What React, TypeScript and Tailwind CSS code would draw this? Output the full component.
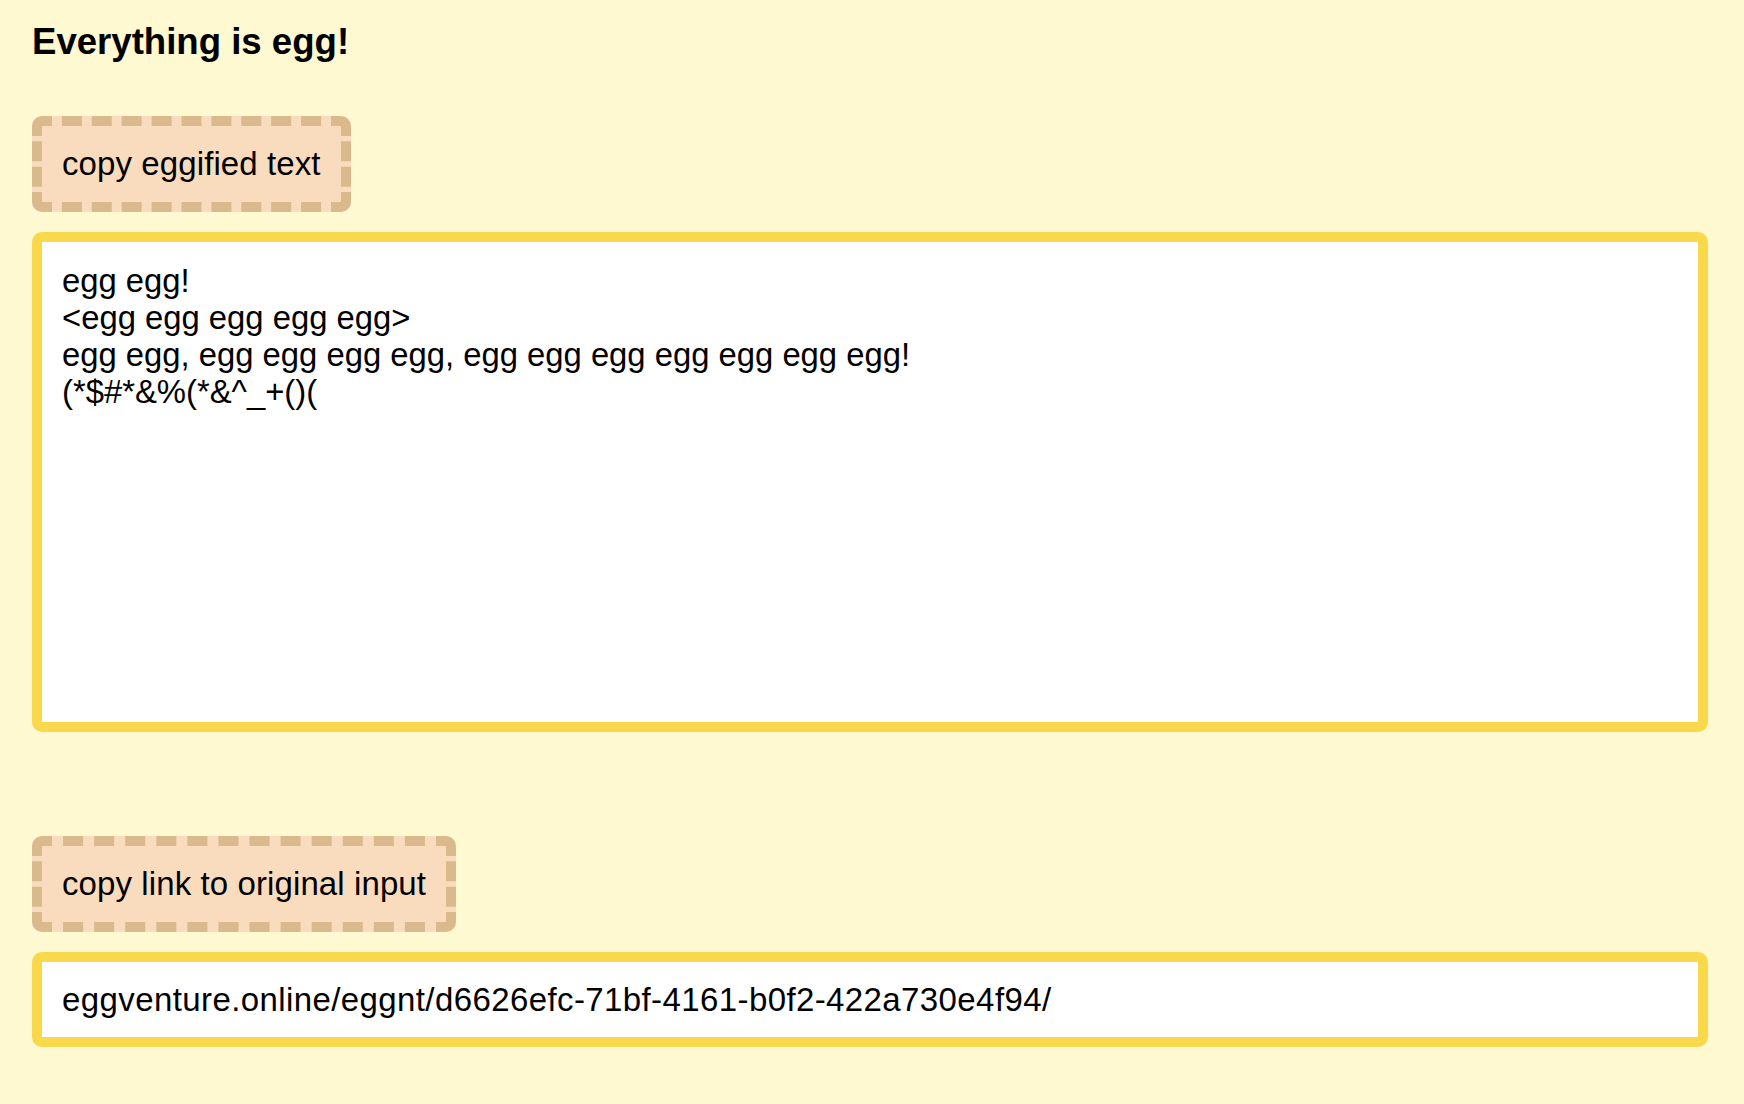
import React from 'react';

const eggText = `egg egg!
<egg egg egg egg egg>
egg egg, egg egg egg egg, egg egg egg egg egg egg egg!
(*$#*&%(*&^_+()(`;

const originalLink = 'eggventure.online/eggnt/d6626efc-71bf-4161-b0f2-422a730e4f94/';

function CopyButton({ label }: { label: string }) {
  return (
    <button
      type="button"
      className="self-start rounded-[10px] border-[10px] border-dashed border-[#dab98c] bg-[#f9dcbe] px-5 py-[19px] text-[33px] leading-[38px] tracking-[0.1px] text-black"
    >
      {label}
    </button>
  );
}

export default function App() {
  return (
    <div className="min-h-screen bg-[#fef9d0] pl-8 pr-9 pt-[21px] pb-14 font-['Liberation_Sans',Helvetica,Arial,sans-serif] text-black">
      <h3 className="text-[36.6px] font-bold leading-[42px]">Everything is egg!</h3>

      <div className="mt-[53px] flex flex-col">
        <CopyButton label="copy eggified text" />
        <textarea
          readOnly
          value={eggText}
          className="mt-5 h-[500px] w-full resize-none rounded-[10px] border-[10px] border-[#fad84b] bg-white px-5 py-5 text-[32.8px] leading-[37px] text-black outline-none"
        />
      </div>

      <div className="mt-[104px] flex flex-col">
        <CopyButton label="copy link to original input" />
        <input
          readOnly
          value={originalLink}
          className="mt-5 w-full rounded-[10px] border-[10px] border-[#fad84b] bg-white px-5 py-[19px] text-[33px] leading-[37px] tracking-[0.4px] text-black outline-none"
        />
      </div>
    </div>
  );
}
